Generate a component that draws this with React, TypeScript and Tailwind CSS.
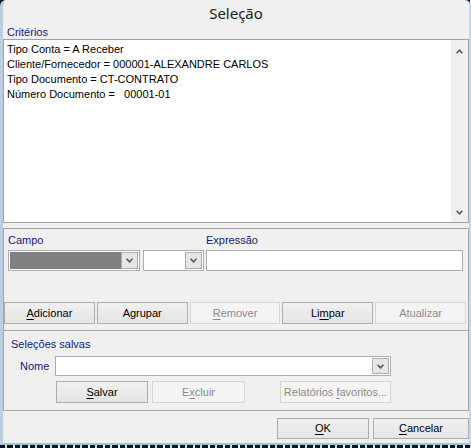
import React from "react";

const Chevron = ({ up = false }: { up?: boolean }) => (
  <svg width="7" height="5" viewBox="0 0 7 5" className="block">
    <polyline
      points={up ? "0.6,4.2 3.5,1.2 6.4,4.2" : "0.6,0.8 3.5,3.8 6.4,0.8"}
      fill="none"
      stroke="#555555"
      strokeWidth="1.5"
    />
  </svg>
);

type BtnProps = {
  children: React.ReactNode;
  disabled?: boolean;
  className?: string;
};

function Btn({ children, disabled = false, className = "" }: BtnProps) {
  const look = disabled
    ? "border-[#d4d4d4] bg-[#f4f4f4] text-[#8b8b8b]"
    : "border-[#acacac] bg-linear-to-b from-[#f0f0f0] to-[#e5e5e5] text-black";
  return (
    <div className={`flex items-center justify-center border ${look} ${className}`}>
      <span className="leading-none">{children}</span>
    </div>
  );
}

type ComboProps = { className?: string; filled?: boolean };

function Combo({ className = "", filled = false }: ComboProps) {
  return (
    <div className={`flex border border-[#abadb3] bg-white p-[1px] ${className}`}>
      <div className={filled ? "flex-1 bg-[#808080]" : "flex-1"} />
      <div className="flex w-[17px] items-center justify-center border border-[#acacac] bg-[#e6e6e6]">
        <Chevron />
      </div>
    </div>
  );
}

const U = ({ children }: { children: React.ReactNode }) => (
  <span className="underline decoration-1 underline-offset-[2px]">{children}</span>
);

export default function App() {
  return (
    <div className="flex h-[448px] w-[471px] flex-col bg-[repeating-linear-gradient(90deg,#111111_0px,#111111_5px,#d8d8d8_5px,#d8d8d8_7px,#111111_7px,#111111_13px,#f2f2f2_13px,#f2f2f2_15px)] font-['Liberation_Sans',Arial,sans-serif] text-[11px] text-black">
      <div className="flex h-[445px] flex-col rounded-t-[6px] border-b-[2px] border-l-[3px] border-r-[2px] border-b-[#8ccbea] border-l-[#b9cfe9] border-r-[#c4d8ee] bg-[#f0f0f0]">
        {/* title bar */}
        <div className="flex h-[26px] items-center justify-center font-['Noto_Sans',sans-serif] text-[15px] text-[#222222]">
          Seleção
        </div>

        {/* criteria list */}
        <div className="h-[13px] pl-[4px] leading-[13px] text-[#15177a]">Critérios</div>
        <div className="flex h-[184px] border border-[#a0a0a0] bg-white">
          <div className="flex-1 pl-[3px] pt-[2px] leading-[15px]">
            <div>Tipo Conta = A Receber</div>
            <div>Cliente/Fornecedor = 000001-ALEXANDRE CARLOS</div>
            <div>Tipo Documento = CT-CONTRATO</div>
            <div className="whitespace-pre">Número Documento =   00001-01</div>
          </div>
          <div className="flex w-[17px] flex-col items-center justify-between bg-[#f0f0f0] pb-[7px] pt-[9px]">
            <Chevron up />
            <Chevron />
          </div>
        </div>

        {/* field / expression editor */}
        <div className="mt-[5px] flex h-[103px] flex-col border border-[#a5a5a5] pt-[5px]">
          <div className="flex h-[13px] pl-[4px] leading-[13px] text-[#15177a]">
            <span className="w-[132px]">Campo</span>
            <span className="ml-[3px] w-[61px]" />
            <span className="ml-[2px]">Expressão</span>
          </div>
          <div className="mt-[3px] flex h-[21px] pl-[4px]">
            <Combo className="w-[132px]" filled />
            <Combo className="ml-[3px] w-[61px]" />
            <div className="ml-[2px] w-[257px] border border-[#abadb3] bg-white" />
          </div>
          <div className="mt-[31px] flex h-[22px] gap-[2px] pr-[2px]">
            <Btn className="flex-1">
              <U>A</U>dicionar
            </Btn>
            <Btn className="flex-1">Agrupar</Btn>
            <Btn className="flex-1" disabled>
              <U>R</U>emover
            </Btn>
            <Btn className="flex-1">
              Li<U>m</U>par
            </Btn>
            <Btn className="flex-1" disabled>
              Atualizar
            </Btn>
          </div>
        </div>

        {/* saved selections */}
        <div className="flex h-[80px] flex-col border border-t-0 border-[#a5a5a5] pt-[7px]">
          <div className="h-[13px] pl-[7px] leading-[13px] text-[#15177a]">Seleções salvas</div>
          <div className="mt-[5px] flex h-[20px] items-center">
            <span className="w-[51px] pl-[16px] text-[#15177a]">Nome</span>
            <Combo className="h-[20px] w-[336px]" />
          </div>
          <div className="mt-[5px] flex h-[22px]">
            <Btn className="ml-[52px] w-[92px]">
              <U>S</U>alvar
            </Btn>
            <Btn className="ml-[4px] w-[93px]" disabled>
              E<U>x</U>cluir
            </Btn>
            <Btn className="ml-[35px] w-[111px]" disabled>
              Relatórios <U>f</U>avoritos...
            </Btn>
          </div>
        </div>

        {/* dialog buttons */}
        <div className="mt-[7px] flex h-[21px] justify-end gap-[4px]">
          <Btn className="w-[92px]">
            <U>O</U>K
          </Btn>
          <Btn className="w-[96px]">
            <U>C</U>ancelar
          </Btn>
        </div>
      </div>
    </div>
  );
}
